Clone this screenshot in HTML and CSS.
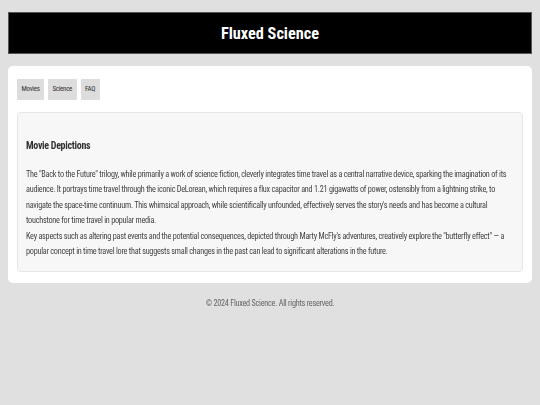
FILE: index.html
```html
<!DOCTYPE html>
<html lang="en">
<head>
<meta charset="utf-8">
<title>Fluxed Science</title>
<link rel="stylesheet" href="styles.css">
</head>
<body>
<header class="site-header">
  <h1 class="site-title">Fluxed Science</h1>
</header>
<main class="card">
  <nav class="nav">
    <a class="nav-btn" href="#">Movies</a>
    <a class="nav-btn" href="#">Science</a>
    <a class="nav-btn" href="#">FAQ</a>
  </nav>
  <section class="panel">
    <h2 class="panel-title">Movie Depictions</h2>
    <p class="panel-text">The "Back to the Future" trilogy, while primarily a work of science fiction, cleverly integrates time travel as a central narrative device, sparking the imagination of its audience. It portrays time travel through the iconic DeLorean, which requires a flux capacitor and 1.21 gigawatts of power, ostensibly from a lightning strike, to navigate the space-time continuum. This whimsical approach, while scientifically unfounded, effectively serves the story's needs and has become a cultural touchstone for time travel in popular media.<br>Key aspects such as altering past events and the potential consequences, depicted through Marty McFly's adventures, creatively explore the "butterfly effect" — a popular concept in time travel lore that suggests small changes in the past can lead to significant alterations in the future.</p>
  </section>
</main>
<footer class="site-footer">© 2024 Fluxed Science. All rights reserved.</footer>
</body>
</html>
```
FILE: styles.css
```css
html, body {
  margin: 0;
  padding: 0;
}
body {
  background: #e0e0e0;
  font-family: "Roboto Condensed", "Liberation Sans", Arial, sans-serif;
  font-weight: 400;
  color: #333;
  padding: 12px 8px 0;
}
.site-header {
  background: #000;
  border: 1px solid #555;
  height: 40px;
  display: flex;
  align-items: center;
  justify-content: center;
}
.site-title {
  margin: 0;
  color: #fff;
  font-size: 16.3px;
  font-weight: 700;
}
.card {
  display: block;
  margin-top: 12px;
  background: #fff;
  border-radius: 5px;
  padding: 13px 9px 11px;
}
.nav {
  display: flex;
  gap: 4px;
}
.nav-btn {
  display: block;
  background: #ddd;
  color: #333;
  text-decoration: none;
  font-size: 7px;
  font-weight: 400;
  letter-spacing: -0.3px;
  padding: 0 4.5px;
  line-height: 21px;
  border-radius: 1px;
  transform: translateZ(0);
}
.panel {
  margin-top: 12px;
  background: #f7f7f7;
  border: 1px solid #e6e6e6;
  border-radius: 4px;
  padding: 27px 8px 12px;
}
.panel-title {
  margin: 0 0 16px;
  font-size: 10px;
  letter-spacing: -0.3px;
  font-weight: 700;
  color: #333;
  transform: translateZ(0);
}
.panel-text {
  margin: 0;
  font-size: 8.2px;
  letter-spacing: -0.25px;
  line-height: 15.4px;
  color: #444;
  transform: translateZ(0);
}
.site-footer {
  text-align: center;
  font-size: 8.2px;
  letter-spacing: -0.25px;
  color: #666;
  padding: 15px 0;
  transform: translateZ(0);
}
```
